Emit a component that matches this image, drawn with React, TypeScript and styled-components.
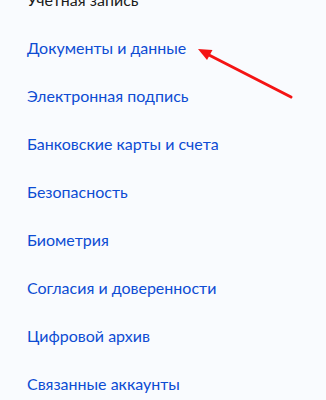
import React from "react";
import styled, {createGlobalStyle} from "styled-components";

const GlobalStyle = createGlobalStyle`
  html, body {
    margin: 0;
    padding: 0;
    background: #f9fbfe;
  }

  body {
    font-family: Lato, "Noto Sans", sans-serif;
    -webkit-font-smoothing: antialiased;
  }
`;

const Page = styled.div`
  position: relative;
  width: 326px;
  height: 400px;
  overflow: hidden;
  background: #f9fbfe;
`;

const Menu = styled.ul`
  list-style: none;
  margin: -24px 0 0;
  padding: 0 0 0 27px;
`;

const MenuItem = styled.li<{ $active?: boolean }>`
  height: 48px;
  line-height: 48px;
  font-size: 16px;
  color: ${({$active}) => $active ? "#1b1b1b" : "#0d4cd3"};
  white-space: nowrap;
`;

// the red pointer drawn over the list
const Pointer = styled.svg`
  position: absolute;
  left: 0;
  top: 0;
  pointer-events: none;
`;

const items = [
    "Учетная запись",
    "Документы и данные",
    "Электронная подпись",
    "Банковские карты и счета",
    "Безопасность",
    "Биометрия",
    "Согласия и доверенности",
    "Цифровой архив",
    "Связанные аккаунты",
];

const App = () => {
    return <>
        <GlobalStyle/>
        <Page>
            <Menu>
                {
                    items.map((item, index) => {
                        return <MenuItem key={index} $active={index === 0}>{item}</MenuItem>
                    })
                }
            </Menu>
            <Pointer width="326" height="400" viewBox="0 0 326 400">
                <line x1="291" y1="97" x2="207" y2="54" stroke="#f41414" strokeWidth="3" strokeLinecap="round"/>
                <polygon points="198,49 212.5,50 207,60" fill="#f41414"/>
            </Pointer>
        </Page>
    </>
}

export default App;
